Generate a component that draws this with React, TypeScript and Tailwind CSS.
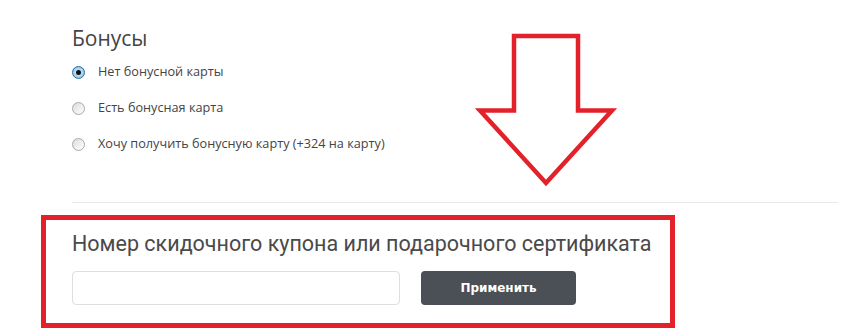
import React from "react";

const options = [
  { label: "Нет бонусной карты", checked: true },
  { label: "Есть бонусная карта", checked: false },
  { label: "Хочу получить бонусную карту (+324 на карту)", checked: false },
];

function Radio({ checked }: { checked: boolean }) {
  if (checked) {
    return (
      <span className="w-[13px] h-[13px] rounded-full border border-[#2c6fa3] bg-[radial-gradient(circle,#e8f4fc_0%,#9fd0f0_60%,#5aa6dc_100%)] flex items-center justify-center shrink-0">
        <span className="w-[5px] h-[5px] rounded-full bg-[#111]" />
      </span>
    );
  }
  return (
    <span className="w-[13px] h-[13px] rounded-full border border-[#a9a9a9] bg-[linear-gradient(135deg,#dcdcdc,#ffffff)] shrink-0" />
  );
}

export default function App() {
  return (
    <div className="relative w-[859px] h-[336px] bg-white overflow-hidden font-['Open_Sans',sans-serif]">
      <div className="pl-[72px] pt-[24px]">
        <h2 className="text-[21px] leading-[28px] text-[#444]">Бонусы</h2>
        <div className="mt-[2px] flex flex-col">
          {options.map((o) => (
            <label key={o.label} className="h-[36px] flex items-center gap-[13px] text-[12.7px] text-[#444]">
              <Radio checked={o.checked} />
              <span>{o.label}</span>
            </label>
          ))}
        </div>
      </div>

      <div className="ml-[72px] mt-[40px] w-[766px] border-t border-[#e8e8e8]" />

      <div className="ml-[41px] mt-[12px] w-[634px] h-[113px] border-[5px] border-[#e3212a] pl-[26px] pt-[10px]">
        <h3 className="text-[21.5px] leading-[28px] text-[#4a4a4a] font-['Roboto',sans-serif]">
          Номер скидочного купона или подарочного сертификата
        </h3>
        <div className="mt-[13px] flex items-center gap-[21px]">
          <input
            type="text"
            className="w-[328px] h-[34px] rounded-[4px] border border-[#dedede] bg-white outline-none px-2 text-[13px]"
          />
          <button
            type="button"
            className="w-[155px] h-[34px] rounded-[4px] bg-[#4b4f56] text-white text-[12px] font-bold font-['DejaVu_Sans',sans-serif]"
          >
            Применить
          </button>
        </div>
      </div>

      <svg
        className="absolute left-0 top-0 pointer-events-none"
        width="859"
        height="336"
        viewBox="0 0 859 336"
        fill="none"
      >
        <path
          d="M514 36 L578 36 L578 110.5 L612 110.5 L546 183 L480 110.5 L514 110.5 Z"
          stroke="#e3212a"
          strokeWidth="4.5"
          strokeLinejoin="miter"
        />
      </svg>
    </div>
  );
}
